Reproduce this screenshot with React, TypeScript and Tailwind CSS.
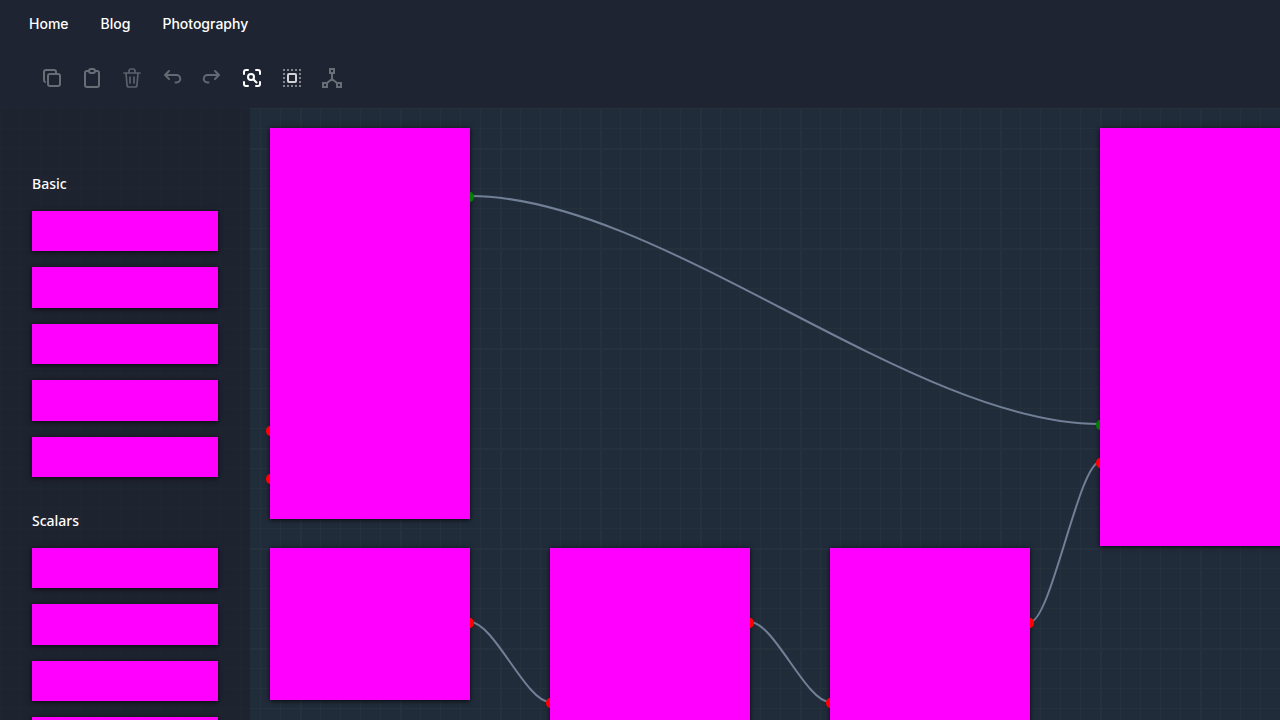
import React from "react";

const toolClass = "flex size-6 items-center justify-center";

function Icon({ children }: { children: React.ReactNode }) {
  return (
    <svg viewBox="0 0 20 20" className="size-5" fill="none" stroke="currentColor" strokeWidth="2" strokeLinejoin="round" strokeLinecap="round" aria-hidden="true">
      {children}
    </svg>
  );
}

const tools = [
  { label: "Copy", color: "text-[#686d76]", icon: <><rect x="6" y="6" width="12" height="12" rx="2" /><path d="M3 14a2 2 0 0 1-1-2V4a2 2 0 0 1 2-2h8a2 2 0 0 1 2 2v2" /></> },
  { label: "Paste", color: "text-[#686d76]", icon: <><path d="M6 3H5a2 2 0 0 0-2 2v12a2 2 0 0 0 2 2h10a2 2 0 0 0 2-2V5a2 2 0 0 0-2-2h-1" /><rect x="7" y="1" width="6" height="4" rx="2" /></> },
  { label: "Delete", color: "text-[#5c616b]", icon: <path d="M2 5h16M4 5l1 12a2 2 0 0 0 2 2h6a2 2 0 0 0 2-2l1-12M7 5V3a2 2 0 0 1 2-2h2a2 2 0 0 1 2 2v2M8 9v6M12 9v6" strokeWidth="1.7" /> },
  { label: "Undo", color: "text-[#646973]", icon: <path d="M7 3 3 7l4 4M3 7h11.500a3.700 3.700 0 0 1 0 7.500h-1" /> },
  { label: "Redo", color: "text-[#646973]", icon: <path d="m13 3 4 4-4 4M17 7H5.500a3.700 3.700 0 0 0 0 7.500h1" /> },
  { label: "Zoom to fit", color: "text-white", icon: <><path d="M2 6V4a2 2 0 0 1 2-2h2M14 2h2a2 2 0 0 1 2 2v2M18 14v2a2 2 0 0 1-2 2h-2M6 18H4a2 2 0 0 1-2-2v-2" /><circle cx="9" cy="9" r="3" /><path d="m11.500 11.500 3 3" /></> },
  { label: "Select all", color: "text-[#d2d3d6]", icon: <><path d="M1 2h18M1 18h18M2 1v18M18 1v18" strokeLinecap="butt" strokeDasharray="2 2" opacity=".55" /><rect x="6" y="6" width="8" height="8" rx="1" /></> },
  { label: "Arrange nodes", color: "text-[#686d76]", icon: <><rect x="8" y="1" width="4" height="4" strokeLinejoin="miter" /><rect x="1" y="15" width="4" height="4" strokeLinejoin="miter" /><rect x="15" y="15" width="4" height="4" strokeLinejoin="miter" /><path d="M10 5v6l-5 4M10 11l5 4" /></> },
];

const node = "absolute w-[200px] bg-[#f0f] shadow-[0_1px_5px_#000000cc]";

function Group({ title, items, listClass }: { title: string; items: string[]; listClass: string }) {
  return (
    <section>
      <h2 className="mb-[15px] font-['Noto_Sans','Open_Sans',sans-serif] text-sm font-medium leading-6 text-white">{title}</h2>
      <ul className={`flex flex-col gap-4 ${listClass}`}>
        {items.map((item) => <li key={item} aria-label={item} className="flex-1 bg-[#f0f] shadow-[0_1px_5px_#000000cc]" />)}
      </ul>
    </section>
  );
}

const wires = [
  "M220 88C410 88 660 316 850 316",
  "M220 514C244 514 276 594 300 594",
  "M500 514C524 514 556 594 580 594",
  "M780 514C801 514 829 354 850 354",
];

export default function App() {
  return (
    <div className="flex h-screen flex-col overflow-hidden bg-[#1e2431] font-['Inter',sans-serif]">
      <nav className="flex h-12 shrink-0 items-center gap-8 pl-[29px] text-sm font-medium text-white">
        <a href="#home">Home</a>
        <a href="#blog">Blog</a>
        <a href="#photography">Photography</a>
      </nav>
      <div className="flex h-15 shrink-0 items-center gap-4 pl-10" role="toolbar" aria-label="Editor">
        {tools.map((t) => (
          <button key={t.label} aria-label={t.label} className={`${toolClass} ${t.color}`}><Icon>{t.icon}</Icon></button>
        ))}
      </div>
      <div className="flex min-h-0 grow">
        <aside className="flex w-[250px] shrink-0 flex-col gap-8 overflow-hidden bg-[#1e2330] bg-[linear-gradient(#ffffff02_1px,transparent_1px),linear-gradient(90deg,#ffffff02_1px,transparent_1px)] bg-size-[20px_20px] px-8 pt-16">
          <Group title="Basic" items={["b1", "b2", "b3", "b4", "b5"]} listClass="h-[266px] shrink-0" />
          <Group title="Scalars" items={["s1", "s2", "s3", "s4"]} listClass="h-[209px] shrink-0" />
        </aside>
        <main className="relative grow overflow-hidden bg-[#212c3b]">
          <svg className="absolute inset-0 size-full" fill="none" aria-hidden="true">
            <defs>
              <pattern id="grid" width="100" height="100" x="50" y="40" patternUnits="userSpaceOnUse">
                <path d="M20.500 0v100M40.500 0v100M60.500 0v100M80.500 0v100M0 20.500h100M0 40.500h100M0 60.500h100M0 80.500h100" stroke="#25323e" />
                <path d="M1 0v100M0 1h100" stroke="#25323e" strokeWidth="2" />
              </pattern>
            </defs>
            <rect width="100%" height="100%" fill="url(#grid)" />
            <g stroke="#718096" strokeWidth="2">
              {wires.map((d) => <path key={d} d={d} />)}
            </g>
          </svg>
          <div className={`${node} left-5 top-5 h-[391px]`} />
          <div className={`${node} left-[850px] top-5 h-[418px]`} />
          <div className={`${node} left-5 top-[440px] h-[152px]`} />
          <div className={`${node} left-[300px] top-[440px] h-[200px]`} />
          <div className={`${node} left-[580px] top-[440px] h-[200px]`} />
          <svg className="absolute inset-0 size-full" aria-hidden="true">
            <path fill="green" d="M220 84a4 5 0 0 1 0 10zM850 312a4 5 0 0 0 0 10z" />
            <path fill="red" d="M20 318a4 5 0 0 0 0 10zM20 366a4 5 0 0 0 0 10zM220 510a4 5 0 0 1 0 10zM300 590a4 5 0 0 0 0 10zM500 510a4 5 0 0 1 0 10zM580 590a4 5 0 0 0 0 10zM780 510a4 5 0 0 1 0 10zM850 350a4 5 0 0 0 0 10z" />
          </svg>
        </main>
      </div>
    </div>
  );
}
